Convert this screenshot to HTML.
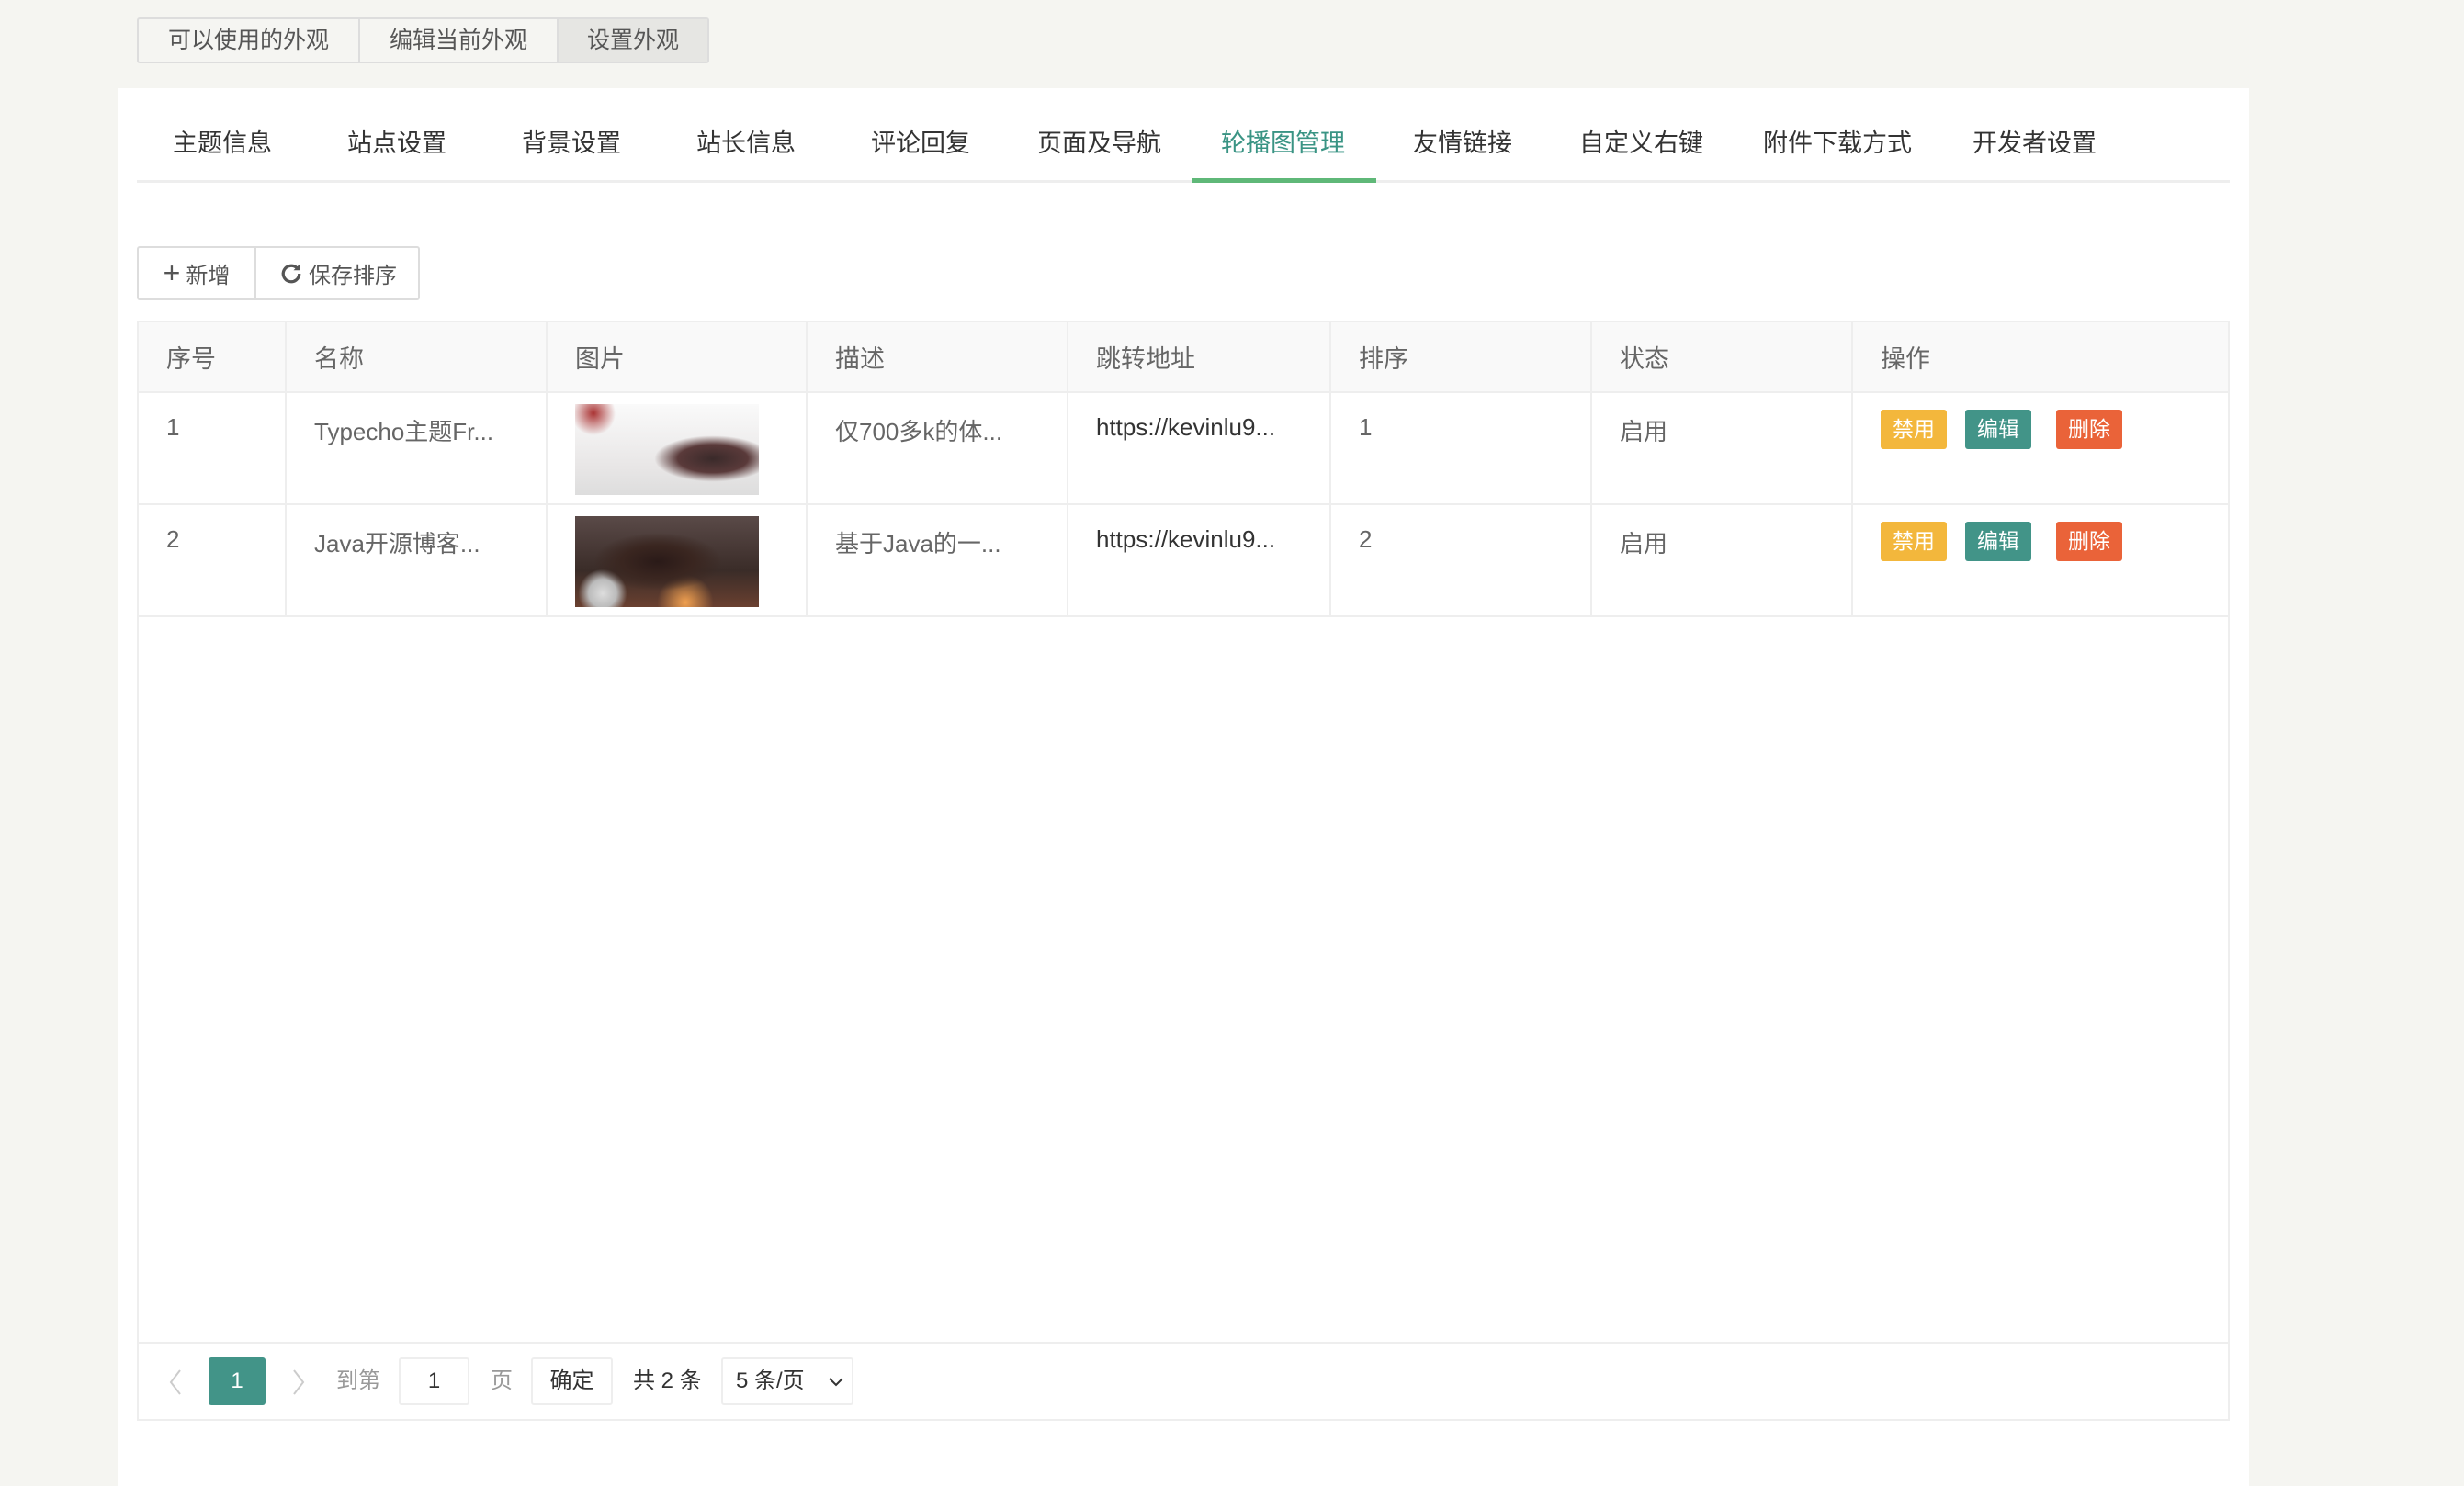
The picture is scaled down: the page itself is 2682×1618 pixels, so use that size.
<!DOCTYPE html>
<html><head><meta charset="utf-8"><style>
*{box-sizing:border-box;margin:0;padding:0}
body{width:2682px;height:1618px;background:#f5f5f1;font-family:"Liberation Sans","Noto Sans CJK SC",sans-serif;position:relative;overflow:hidden;color:#666}
.abs{position:absolute}
.tg{left:149px;top:19px;height:50px;display:flex;border:2px solid #ddd;border-radius:3px;background:#f5f5f2}
.tg div{height:46px;line-height:46px;font-size:25px;color:#555;padding:0 32px;border-right:2px solid #ddd}
.tg div:last-child{border-right:0;background:#e6e6e3;padding:0 31px}
.panel{left:128px;top:96px;width:2320px;height:1522px;background:#fff}
.tab{top:136px;font-size:27px;color:#333;line-height:40px}
.tline{left:149px;top:196px;width:2278px;height:3px;background:#eee}
.act{left:1298px;top:194px;width:200px;height:5px;background:#5fb878}
.bg{left:149px;top:268px;width:308px;height:59px;border:2px solid #ddd;border-radius:3px;display:flex;font-size:24px;color:#555}
.bg div{display:flex;align-items:center;justify-content:center}
table{position:absolute;left:149px;top:349px;width:2278px;border-collapse:collapse;font-size:26px;color:#666}
td,th{border:2px solid #eee;text-align:left;font-weight:normal;padding:0 0 0 30px;vertical-align:top}
th{height:77px;vertical-align:middle;background:#f9f9f9;font-size:27px}
td{height:122px;padding-top:22px}
.img{width:200px;height:99px;margin-top:-10px}
.b{display:inline-block;width:72px;height:43px;line-height:43px;text-align:center;color:#fff;font-size:23px;border-radius:3px;margin-top:-4px}
.box{left:149px;top:671px;width:2278px;height:876px;border:2px solid #eee;border-top:0}
.pline{left:149px;top:1461px;width:2278px;height:2px;background:#eee}
.pg{font-size:24px;top:1478px;height:52px;line-height:52px}
.inp{border:2px solid #eee;border-radius:3px;text-align:center;color:#333}
</style></head><body>
<div class="abs tg"><div>可以使用的外观</div><div>编辑当前外观</div><div>设置外观</div></div>
<div class="abs panel"></div>
<div class="abs tab" style="left:188px">主题信息</div>
<div class="abs tab" style="left:378px">站点设置</div>
<div class="abs tab" style="left:568px">背景设置</div>
<div class="abs tab" style="left:758px">站长信息</div>
<div class="abs tab" style="left:948px">评论回复</div>
<div class="abs tab" style="left:1129px">页面及导航</div>
<div class="abs tab" style="left:1329px;color:#3a9484">轮播图管理</div>
<div class="abs tab" style="left:1538px">友情链接</div>
<div class="abs tab" style="left:1719px">自定义右键</div>
<div class="abs tab" style="left:1919px">附件下载方式</div>
<div class="abs tab" style="left:2147px">开发者设置</div>
<div class="abs tline"></div><div class="abs act"></div>
<div class="abs bg"><div style="width:128px;border-right:2px solid #ddd"><span style="font-size:32px;margin-right:6px;color:#555">+</span>新增</div><div style="flex:1"><svg width="30" height="30" viewBox="0 0 24 24" style="margin-right:4px"><path d="M19 12a7 7 0 1 1-2.1-5" fill="none" stroke="#555" stroke-width="2.6"/><path d="M20 3v6h-6z" fill="#555"/></svg>保存排序</div></div>
<table>
<tr><th style="width:161px">序号</th><th style="width:284px">名称</th><th style="width:283px">图片</th><th style="width:284px">描述</th><th style="width:286px">跳转地址</th><th style="width:284px">排序</th><th style="width:284px">状态</th><th>操作</th></tr>
<tr><td>1</td><td>Typecho主题Fr...</td><td><div class="img" style="background:radial-gradient(ellipse at 75% 60%,#3a2a2a 0,#5a3a3a 18%,transparent 30%),radial-gradient(circle at 10% 10%,#a33 0,transparent 12%),linear-gradient(#fafafa,#e8e6e6 70%,#ddd)"></div></td><td>仅700多k的体...</td><td style="color:#333">https://kevinlu9...</td><td>1</td><td>启用</td><td><span class="b" style="background:#f3b73c">禁用</span><span class="b" style="background:#429488;margin-left:20px">编辑</span><span class="b" style="background:#ea6339;margin-left:27px">删除</span></td></tr>
<tr><td>2</td><td>Java开源博客...</td><td><div class="img" style="background:radial-gradient(ellipse at 45% 50%,#2a1a18 0,#3a2620 25%,transparent 45%),radial-gradient(circle at 15% 85%,#ddd 0,#bbb 8%,transparent 14%),radial-gradient(circle at 60% 95%,#f0a050 0,transparent 20%),linear-gradient(#5a4a48,#3a2c28 60%,#6a4030)"></div></td><td>基于Java的一...</td><td style="color:#333">https://kevinlu9...</td><td>2</td><td>启用</td><td><span class="b" style="background:#f3b73c">禁用</span><span class="b" style="background:#429488;margin-left:20px">编辑</span><span class="b" style="background:#ea6339;margin-left:27px">删除</span></td></tr>
</table>
<div class="abs box"></div>
<div class="abs pline"></div>
<svg class="abs" style="left:180px;top:1490px" width="20" height="30" viewBox="0 0 20 30"><path d="M16 2L6 15l10 13" fill="none" stroke="#ccc" stroke-width="2"/></svg>
<div class="abs pg" style="left:227px;width:62px;background:#429488;color:#fff;text-align:center;border-radius:3px">1</div>
<svg class="abs" style="left:316px;top:1490px" width="20" height="30" viewBox="0 0 20 30"><path d="M4 2l10 13L4 28" fill="none" stroke="#ccc" stroke-width="2"/></svg>
<div class="abs pg" style="left:366px;color:#999">到第</div>
<div class="abs pg inp" style="left:434px;width:77px;line-height:48px">1</div>
<div class="abs pg" style="left:534px;color:#999">页</div>
<div class="abs pg inp" style="left:578px;width:89px;line-height:48px">确定</div>
<div class="abs pg" style="left:689px;color:#333">共 2 条</div>
<div class="abs pg inp" style="left:785px;width:144px;line-height:48px;text-align:left;padding-left:14px">5 条/页<svg width="18" height="12" viewBox="0 0 18 12" style="position:absolute;right:8px;top:19px"><path d="M2 2l7 7 7-7" fill="none" stroke="#333" stroke-width="2"/></svg></div>
</body></html>
